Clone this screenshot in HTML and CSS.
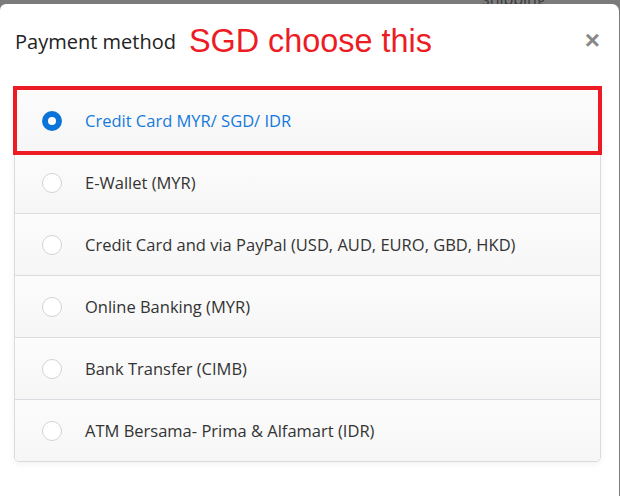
FILE: index.html
```html
<!DOCTYPE html>
<html>
<head>
<meta charset="utf-8">
<link rel="stylesheet" href="styles.css">
</head>
<body>
<div class="backdrop-text">shipping</div>
<div class="modal">
  <div class="modal-header">
    <h5 class="modal-title">Payment method</h5>
    <span class="annotation">SGD choose this</span>
    <span class="close">&times;</span>
  </div>
  <div class="list">
    <div class="item active">
      <span class="radio checked"></span>
      <span class="label">Credit Card MYR/ SGD/ IDR</span>
      <span class="highlight"></span>
    </div>
    <div class="item"><span class="radio"></span><span class="label">E-Wallet (MYR)</span></div>
    <div class="item"><span class="radio"></span><span class="label">Credit Card and via PayPal (USD, AUD, EURO, GBD, HKD)</span></div>
    <div class="item"><span class="radio"></span><span class="label">Online Banking (MYR)</span></div>
    <div class="item"><span class="radio"></span><span class="label">Bank Transfer (CIMB)</span></div>
    <div class="item"><span class="radio"></span><span class="label">ATM Bersama- Prima &amp; Alfamart (IDR)</span></div>
  </div>
</div>
</body>
</html>
```
FILE: styles.css
```css
html, body {
  margin: 0;
  padding: 0;
}
body {
  background: #7b7b7b;
  width: 620px;
  height: 496px;
  overflow: hidden;
  position: relative;
  font-family: "Open Sans", "Noto Sans", sans-serif;
}
.backdrop-text {
  position: absolute;
  top: -12px;
  left: 482px;
  font-size: 16px;
  color: #3a3a3a;
}
.modal {
  position: relative;
  margin-top: 4px;
  width: 619px;
  height: 492px;
  background: #fff;
  border-radius: 6px 7px 0 0;
  box-sizing: border-box;
}
.modal-header {
  display: flex;
  align-items: baseline;
  padding: 18px 0 0 15px;
  height: 46px;
  box-sizing: border-box;
}
.modal-title {
  margin: 0;
  font-size: 20px;
  font-weight: 400;
  color: #222;
  line-height: 1;
}
.annotation {
  margin-left: 13px;
  font-family: "Liberation Sans", Arial, sans-serif;
  font-size: 32.4px;
  color: #ed1c24;
  line-height: 1;
  position: relative;
  top: 3px;
}
.close {
  margin-left: auto;
  margin-right: 19px;
  font-family: "Liberation Sans", Arial, sans-serif;
  font-size: 26px;
  font-weight: 700;
  color: #888;
  line-height: 1;
}
.list {
  margin: 39px 18px 0 14px;
  border: 1px solid #d8dce0;
  border-radius: 5px;
  box-shadow: 0 2px 6px rgba(0,0,0,0.06);
  position: relative;
}
.item {
  position: relative;
  display: flex;
  align-items: center;
  height: 61px;
  border-top: 1px solid #d8dce0;
  background: linear-gradient(#fcfcfc, #f6f6f6);
  font-size: 16.5px;
  color: #333;
}
.item:first-child {
  border-top: none;
  border-radius: 5px 5px 0 0;
  z-index: 2;
}
.item:last-child {
  border-radius: 0 0 5px 5px;
}
.radio {
  width: 20px;
  height: 20px;
  margin-left: 27px;
  margin-right: 23px;
  border: 1px solid #cfd4da;
  border-radius: 50%;
  background: #fff;
  box-sizing: border-box;
  flex: none;
}
.radio.checked {
  border: 6px solid #0b74d9;
  background: #fff;
}
.item.active .label {
  color: #1479dc;
}
.highlight {
  position: absolute;
  left: -2px;
  right: -2px;
  top: -4px;
  bottom: -4px;
  border: 4px solid #ed1c24;
  pointer-events: none;
}
```
